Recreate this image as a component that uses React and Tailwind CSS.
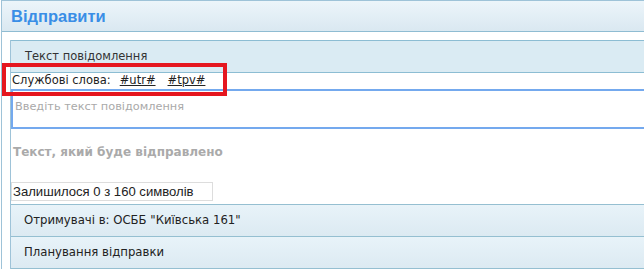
export default function App() {
  const font = { fontFamily: '"DejaVu Sans", Verdana, sans-serif' };
  const lib = { fontFamily: '"Liberation Sans", Arial, sans-serif' };
  return (
    <div className="w-[644px] h-[269px] overflow-hidden bg-white relative" style={font}>
      <div className="w-[700px] ml-px border-l border-t border-[#9ec3d8]">
        <div className="h-[31px] border-b border-[#8fbcd2] bg-gradient-to-b from-[#ecf5fa] to-[#dae8f1] flex items-center pl-[9px]">
          <span className="text-[16.5px] font-bold text-[#3a8ee6] leading-none" style={lib}>Відправити</span>
        </div>
        <div className="pt-[8px] pl-[8px]">
          <div className="border-l border-[#9ec3d8]">
            <div className="h-[33px] border-t border-b border-[#8cbdd3] bg-[#daebf3] flex items-center pl-[14px]">
              <span className="text-[11.5px] text-[#333]">Текст повідомлення</span>
            </div>
            <div className="h-[16px] flex items-center pl-px text-[11.5px] text-[#222]">
              <span>Службові слова:</span>
              <span className="ml-[9px] underline">#utr#</span>
              <span className="ml-[12px] underline">#tpv#</span>
            </div>
            <div className="h-[40px] border-2 border-[#74a9ee] border-r-0 pl-[2px] pt-[2px]">
              <span className="text-[11.3px] text-[#a9a9a9]">Введіть текст повідомлення</span>
            </div>
            <div className="h-[45px] flex items-center pl-[2px]">
              <span className="text-[12px] font-bold text-[#aaaaaa]">Текст, який буде відправлено</span>
            </div>
            <div className="pt-[8px]">
              <div className="w-[202px] h-[19px] border border-[#dddddd] flex items-center pl-px text-[13.1px] text-[#222]" style={lib}>
                Залишилося 0 з 160 символів
              </div>
            </div>
            <div className="mt-[3px] h-[33px] border-t border-b border-[#95bfd1] bg-gradient-to-b from-[#e8f3f9] to-[#dceaf2] flex items-center pl-[13px]">
              <span className="text-[11.7px] text-[#222]">Отримувачі в: ОСББ "Київська 161"</span>
            </div>
            <div className="h-[33px] border-b-2 border-[#95bfd1] bg-gradient-to-b from-[#e8f3f9] to-[#dceaf2] flex items-center pl-[13px]">
              <span className="text-[11.7px] text-[#222]">Планування відправки</span>
            </div>
          </div>
        </div>
      </div>
      <div className="absolute left-[2px] top-[63px] w-[225px] h-[33px] border-4 border-[#e5161f]" />
    </div>
  );
}
